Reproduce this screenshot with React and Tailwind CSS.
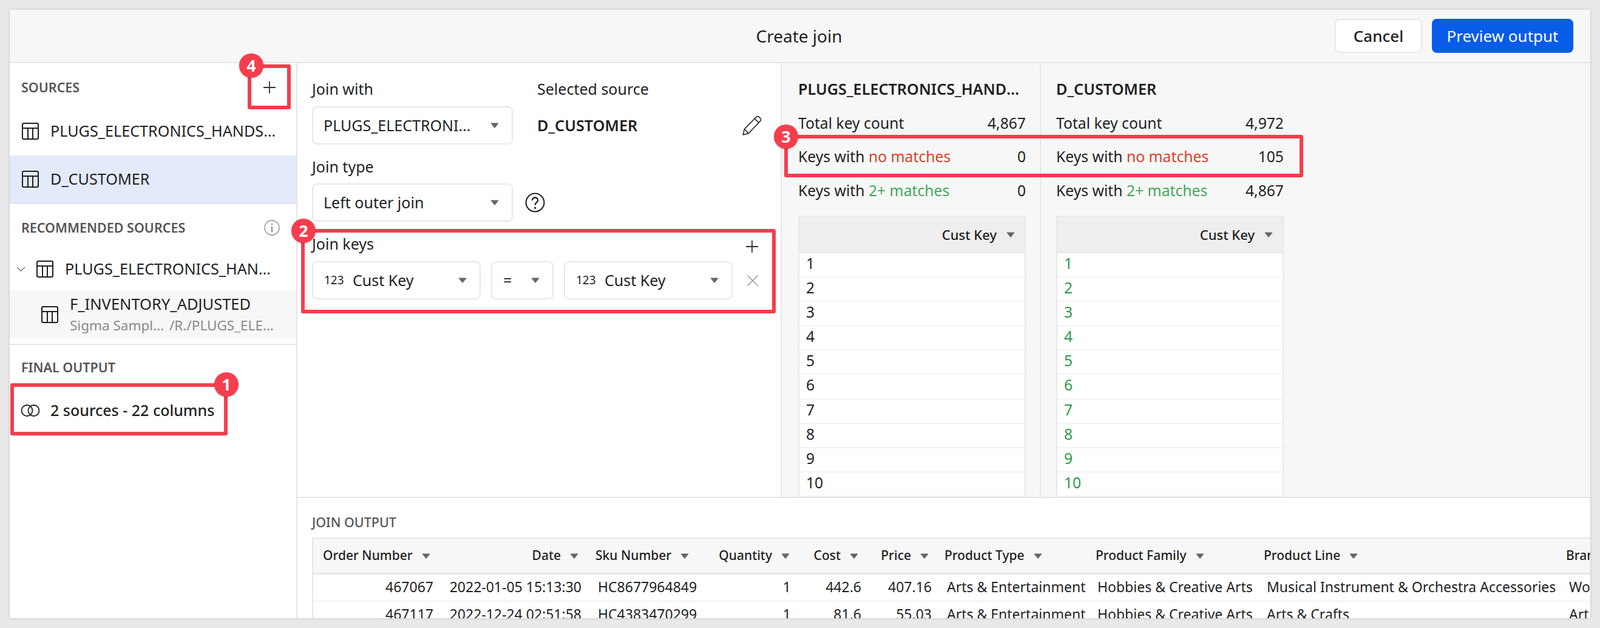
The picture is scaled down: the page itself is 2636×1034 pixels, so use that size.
import React from "react";

const FONT = "font-['Noto_Sans_CJK_JP','Noto_Sans',sans-serif]";

const TableIcon = ({ className = "" }) => (
    <svg viewBox="0 0 28 28" className={`w-[28px] h-[28px] shrink-0 ${className}`} fill="none" stroke="#1f1f1f" strokeWidth="2">
        <rect x="1" y="1" width="26" height="26" rx="2" />
        <path d="M1 9h26M10 9v18M18 9v18" />
    </svg>
);

const Caret = ({ className = "" }) => (
    <svg viewBox="0 0 14 9" className={`w-[14px] h-[9px] shrink-0 ${className}`}>
        <path d="M1 1h12L7 8.5z" fill="#666666" stroke="#666666" strokeLinejoin="round" />
    </svg>
);

const PlusIcon = ({ className = "" }) => (
    <svg viewBox="0 0 22 22" className={`w-[22px] h-[22px] ${className}`} stroke="#333333" strokeWidth="1.8">
        <path d="M11 1v20M1 11h20" />
    </svg>
);

const Label = ({ children, className = "" }) => (
    <div className={`relative top-[-2px] h-[36px] leading-[36px] text-[25px] text-[#1f1f1f] ${className}`}>{children}</div>
);

const Select = ({ width, children }) => (
    <div className={`h-[63px] ${width} border-2 border-[#e8e8e8] rounded-lg bg-white flex items-center justify-between pl-[17px] pr-[21px] text-[25px] text-[#1f1f1f]`}>
        {children}
        <Caret />
    </div>
);

const KeySelect = ({ className = "" }) => (
    <div className={`h-[63px] w-[278px] border-2 border-[#e8e8e8] rounded-lg bg-white flex items-center justify-between pl-[18px] pr-[21px] text-[#1f1f1f] ${className}`}>
        <div className="flex items-center">
            <span className="text-[19px] w-[47px]">123</span>
            <span className="text-[25px]">Cust Key</span>
        </div>
        <Caret />
    </div>
);

const Marker = ({ n, className }) => (
    <div className={`absolute w-[40px] h-[40px] rounded-full bg-[#f63d4d] text-white text-[27px] font-bold leading-[40px] text-center shadow-[0_1px_3px_rgba(0,0,0,0.25)] ${className}`}>
        {n}
    </div>
);

const Stat = ({ label, highlight, color, value, className = "" }) => (
    <div className={`flex items-center justify-between w-[375px] h-[36px] text-[24.7px] text-[#1f1f1f] ${className}`}>
        <span>
            {label} {highlight && <span className={color}>{highlight}</span>}
        </span>
        <span>{value}</span>
    </div>
);

const KeyColumn = ({ title, total, none, many, rowColor }) => (
    <div className="h-full overflow-hidden pt-[24px]">
        <div className="w-[375px] h-[36px] leading-[36px] text-[25.2px] font-semibold text-[#1f1f1f] truncate">{title}</div>
        <Stat className="mt-[21px]" label="Total key count" value={total} />
        <Stat className="mt-[19px]" label="Keys with" highlight="no matches" color="text-[#d8432a]" value={none} />
        <Stat className="mt-[20px]" label="Keys with" highlight="2+ matches" color="text-[#43a85a]" value={many} />
        <div className="w-[375px] mt-[23px] border-2 border-b-0 border-[#e8e8e8]">
            <div className="h-[60px] bg-[#eeeeee] border-b-2 border-[#e8e8e8] flex items-center justify-end gap-[16px] pr-[16px] text-[22px] font-medium text-[#1f1f1f]">
                Cust Key
                <Caret />
            </div>
            {["1", "2", "3", "4", "5", "6", "7", "8", "9", "10", ""].map((n, i) => (
                <div key={i} className={`h-[40.1px] leading-[33px] bg-white border-b-2 border-[#f2f2f2] pl-[11px] text-[24.7px] ${rowColor}`}>
                    {n}
                </div>
            ))}
        </div>
    </div>
);

const columns = [
    { name: "Order Number", w: "w-[216px]", head: "justify-start pl-[16px]", cell: "text-right pr-[18px]" },
    { name: "Date", w: "w-[240px]", head: "justify-end pr-[19px]", cell: "text-right pr-[14px]" },
    { name: "Sku Number", w: "w-[194px]", head: "justify-start pl-[9px]", cell: "text-left pl-[13px]" },
    { name: "Quantity", w: "w-[153px]", head: "justify-end pr-[18px]", cell: "text-right pr-[16px]" },
    { name: "Cost", w: "w-[116px]", head: "justify-end pr-[21px]", cell: "text-right pr-[16px]" },
    { name: "Price", w: "w-[116px]", head: "justify-end pr-[21px]", cell: "text-right pr-[16px]" },
    { name: "Product Type", w: "w-[249px]", head: "justify-start pl-[5px]", cell: "text-left pl-[9px]" },
    { name: "Product Family", w: "w-[276px]", head: "justify-start pl-[5px]", cell: "text-left pl-[8px]" },
    { name: "Product Line", w: "w-[499px]", head: "justify-start pl-[6px]", cell: "text-left pl-[11px]" },
    { name: "Brand", w: "w-[120px]", head: "justify-start pl-[5px]", cell: "text-left pl-[10px]" },
];

const rows = [
    ["467067", "2022-01-05 15:13:30", "HC8677964849", "1", "442.6", "407.16", "Arts & Entertainment", "Hobbies & Creative Arts", "Musical Instrument & Orchestra Accessories", "Wo"],
    ["467117", "2022-12-24 02:51:58", "HC4383470299", "1", "81.6", "55.03", "Arts & Entertainment", "Hobbies & Creative Arts", "Arts & Crafts", "Art"],
];

export default function App() {
    return (
        <div className={`relative w-[2636px] h-[1034px] bg-[#e9e9e9] overflow-hidden ${FONT}`}>
            <div className="absolute left-[16px] top-[16px] w-[2604px] h-[1002px] bg-white overflow-hidden flex flex-col shadow-[0_0_4px_rgba(0,0,0,0.2)]">
                {/* top bar */}
                <div className="relative h-[88px] shrink-0 bg-[#f7f7f7] border-b-2 border-[#e6e6e6] flex items-center justify-center">
                    <span className="text-[28px] text-[#1f1f1f] mr-[3px]">Create join</span>
                    <div className="absolute right-[28px] top-[15px] flex gap-[16px]">
                        <button className="w-[144px] h-[56px] bg-white border-2 border-[#e8e8e8] rounded-lg text-[26px] font-medium text-[#1f1f1f]">Cancel</button>
                        <button className="w-[233px] h-[56px] bg-[#075de8] rounded-lg text-[26px] text-white">Preview output</button>
                    </div>
                </div>

                <div className="flex flex-1 min-h-0">
                    {/* sources */}
                    <div className="w-[474px] shrink-0 border-r-2 border-[#e6e6e6]">
                        <div className="h-[80px] flex items-center justify-between pl-[19px] pr-[33px]">
                            <span className="text-[21.5px] font-semibold text-[#555555]">SOURCES</span>
                            <PlusIcon />
                        </div>
                        <div className="h-[72px] pb-[8px] flex items-center pl-[20px] gap-[19px] text-[25.2px] text-[#1f1f1f]">
                            <TableIcon />
                            <span className="w-[380px] truncate">PLUGS_ELECTRONICS_HANDS_ON_LAB</span>
                        </div>
                        <div className="h-[80px] bg-[#e3eafa] border-b-2 border-[#e6e6e6] flex items-center pl-[20px] gap-[19px] text-[25.2px] text-[#1f1f1f]">
                            <TableIcon />
                            <span>D_CUSTOMER</span>
                        </div>
                        <div className="h-[78px] flex items-center justify-between pl-[19px] pr-[27px]">
                            <span className="text-[21.5px] font-semibold text-[#555555]">RECOMMENDED SOURCES</span>
                            <svg viewBox="0 0 26 26" className="w-[26px] h-[26px]" fill="none" stroke="#8a8a8a" strokeWidth="1.3">
                                <circle cx="13" cy="13" r="12" />
                                <path d="M13 11v9" strokeWidth="2" />
                                <circle cx="13" cy="7" r="1.2" fill="#8a8a8a" stroke="none" />
                            </svg>
                        </div>
                        <div className="h-[64px] pb-[6px] flex items-center pl-[11px] text-[25.2px] text-[#1f1f1f]">
                            <svg viewBox="0 0 16 10" className="w-[15px] h-[10px] mr-[18px]" fill="none" stroke="#777777" strokeWidth="1.3">
                                <path d="M1 1.5l7 7 7-7" />
                            </svg>
                            <TableIcon />
                            <span className="ml-[19px] w-[355px] truncate">PLUGS_ELECTRONICS_HANDS_ON_LAB</span>
                        </div>
                        <div className="h-[80px] bg-[#f7f7f7] flex items-center pl-[52px]">
                            <TableIcon />
                            <div className="ml-[19px] w-[345px]">
                                <div className="h-[36px] leading-[36px] text-[25.5px] text-[#1f1f1f]">F_INVENTORY_ADJUSTED</div>
                                <div className="flex h-[36px] leading-[36px] text-[22.5px] text-[#8a8a8a]">
                                    <span className="w-[158px] mr-[6px] truncate">Sigma Sample Database</span>
                                    <span className="w-[181px] truncate">/R./PLUGS_ELECTRONICS</span>
                                </div>
                            </div>
                        </div>
                        <div className="mt-[8px] border-t-2 border-[#e6e6e6] pt-[24px] pl-[19px] h-[66px] text-[21.5px] font-semibold leading-[26px] text-[#555555]">FINAL OUTPUT</div>
                        <div className="mt-[25px] flex items-center pl-[18px] text-[25px] font-medium text-[#1f1f1f]">
                            <svg viewBox="0 0 32 20" className="w-[32px] h-[20px] mr-[17px]" fill="none" stroke="#1f1f1f" strokeWidth="1.8">
                                <circle cx="10.5" cy="10" r="9" />
                                <circle cx="21.5" cy="10" r="9" />
                            </svg>
                            2 sources - 22 columns
                        </div>
                    </div>

                    <div className="flex-1 min-w-0 flex flex-col">
                        <div className="h-[716px] shrink-0 flex border-b-2 border-[#e6e6e6]">
                            {/* join config */}
                            <div className="w-[798px] shrink-0 border-r-2 border-[#e6e6e6] pl-[24px] pt-[26px]">
                                <div className="flex">
                                    <div>
                                        <Label>Join with</Label>
                                        <div className="mt-[9px]">
                                            <Select width="w-[331px]">
                                                <span className="w-[250px] truncate">PLUGS_ELECTRONICS_HANDS_ON</span>
                                            </Select>
                                        </div>
                                    </div>
                                    <div className="ml-[40px] w-[370px]">
                                        <Label>Selected source</Label>
                                        <div className="mt-[9px] h-[63px] flex items-center justify-between text-[25.2px] font-semibold text-[#1f1f1f]">
                                            D_CUSTOMER
                                            <svg viewBox="2 2 28 28" className="w-[32px] h-[32px]" fill="none" stroke="#333333" strokeWidth="1.5" strokeLinejoin="round">
                                                <path d="M3 29l2-8L22 3.5c1.2-1.2 3-1.2 4.2 0l1.6 1.6c1.2 1.2 1.2 3 0 4.2L11 27z" />
                                                <path d="M5 21l6 6M20 6l6 6" />
                                            </svg>
                                        </div>
                                    </div>
                                </div>
                                <Label className="mt-[20px]">Join type</Label>
                                <div className="mt-[8px] flex items-center">
                                    <Select width="w-[331px]">Left outer join</Select>
                                    <svg viewBox="0 0 32 32" className="w-[33px] h-[33px] ml-[20px]" fill="none" stroke="#222222" strokeWidth="2">
                                        <circle cx="16" cy="16" r="14.5" />
                                        <path d="M11.5 12.5c0-6 9-6 9 0 0 3.5-4.5 3.5-4.5 7.5" strokeWidth="2.2" />
                                        <circle cx="16" cy="24.5" r="1.6" fill="#222222" stroke="none" />
                                    </svg>
                                </div>
                                <div className="mt-[20px] flex items-center justify-between pr-[36px]">
                                    <Label>Join keys</Label>
                                    <PlusIcon className="mt-[6px]" />
                                </div>
                                <div className="mt-[9px] flex items-center">
                                    <KeySelect />
                                    <div className="ml-[17px] w-[103px] h-[63px] border-2 border-[#e8e8e8] rounded-lg bg-white flex items-center justify-between pl-[18px] pr-[21px] text-[25px] text-[#1f1f1f]">
                                        =
                                        <Caret />
                                    </div>
                                    <KeySelect className="ml-[17px]" />
                                    <svg viewBox="0 0 20 20" className="w-[20px] h-[20px] ml-[23px]" stroke="#9a9a9a" strokeWidth="1.6">
                                        <path d="M1.5 1.5l17 17M18.5 1.5l-17 17" />
                                    </svg>
                                </div>
                            </div>

                            {/* key stats */}
                            <div className="flex-1 min-w-0 bg-[#f7f7f7] flex">
                                <div className="w-[427px] pl-[27px] border-r-2 border-[#e6e6e6]">
                                    <KeyColumn title="PLUGS_ELECTRONICS_HANDS_ON_LAB" total="4,867" none="0" many="0" rowColor="text-[#1f1f1f]" />
                                </div>
                                <div className="pl-[25px]">
                                    <KeyColumn title="D_CUSTOMER" total="4,972" none="105" many="4,867" rowColor="text-[#2d9a4a]" />
                                </div>
                            </div>
                        </div>

                        {/* join output */}
                        <div className="flex-1 min-h-0 pl-[24px] pt-[27px]">
                            <div className="h-[26px] leading-[26px] text-[21.5px] font-medium text-[#555555]">JOIN OUTPUT</div>
                            <div className="mt-[12px] w-[2106px] border-l-2 border-t-2 border-[#e6e6e6]">
                                <div className="flex h-[59px] bg-[#f7f7f7] border-b-[3px] border-[#e6e6e6]">
                                    {columns.map((c) => (
                                        <div key={c.name} className={`${c.w} shrink-0 flex items-center gap-[15px] whitespace-nowrap text-[21px] font-medium text-[#1f1f1f] ${c.head}`}>
                                            {c.name}
                                            <Caret />
                                        </div>
                                    ))}
                                </div>
                                {rows.map((r, i) => (
                                    <div key={i} className="flex h-[45px] border-b-2 border-[#f2f2f2]">
                                        {r.map((v, j) => (
                                            <div key={j} className={`${columns[j].w} shrink-0 leading-[41px] whitespace-nowrap text-[23px] text-[#1f1f1f] ${columns[j].cell}`}>
                                                {v}
                                            </div>
                                        ))}
                                    </div>
                                ))}
                            </div>
                        </div>
                    </div>
                </div>
            </div>

            {/* callouts */}
            <div className="absolute left-[408px] top-[106px] w-[71px] h-[74px] border-[6px] border-[#f63d4d] rounded-[3px]" />
            <div className="absolute left-[17px] top-[631px] w-[358px] h-[86px] border-[6px] border-[#f63d4d] rounded-[3px]" />
            <div className="absolute left-[496px] top-[377px] w-[782px] h-[139px] border-[6px] border-[#f63d4d] rounded-[3px]" />
            <div className="absolute left-[1292px] top-[222px] w-[855px] h-[70px] border-[6px] border-[#f63d4d] rounded-[3px]" />
            <Marker n="4" className="left-[394px] top-[88px]" />
            <Marker n="1" className="left-[353px] top-[613px]" />
            <Marker n="2" className="left-[480px] top-[360px]" />
            <Marker n="3" className="left-[1275px] top-[205px]" />
        </div>
    );
}
